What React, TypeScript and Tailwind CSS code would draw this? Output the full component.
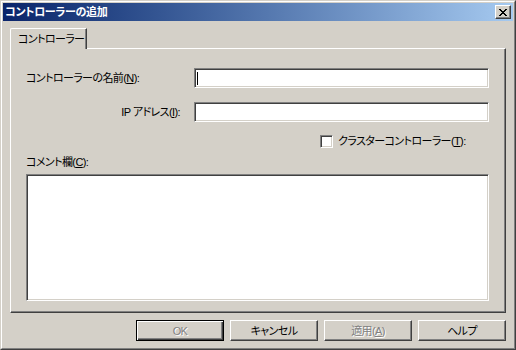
import React from 'react';

// raised 3D edge used by buttons
const raised =
  'border border-t-white border-l-white border-r-[#404040] border-b-[#404040] shadow-[inset_-1px_-1px_0_#808080]';

// sunken 3D edge used by edit boxes
const sunken =
  'border border-t-[#808080] border-l-[#808080] border-r-white border-b-white shadow-[inset_1px_1px_0_#404040,inset_-1px_-1px_0_#d4d0c8] bg-white';

const CloseGlyph: React.FC = () => {
  const rows = ['11000011', '01100110', '00111100', '00011000', '00111100', '01100110', '11000011'];
  return (
    <svg width="8" height="7" viewBox="0 0 8 7" shapeRendering="crispEdges">
      {rows.map((row, y) =>
        row.split('').map((c, x) => (c === '1' ? <rect key={`${x}-${y}`} x={x} y={y} width="1" height="1" fill="#000" /> : null))
      )}
    </svg>
  );
};

const Button: React.FC<{ label: React.ReactNode; disabled?: boolean; isDefault?: boolean }> = ({ label, disabled, isDefault }) => {
  const edge = isDefault
    ? 'border border-black shadow-[inset_1px_1px_0_#fff,inset_-1px_-1px_0_#404040,inset_-2px_-2px_0_#808080]'
    : raised;
  return (
    <div
      className={`w-[88px] h-[21px] flex items-center justify-center ${edge} ${
        disabled ? 'text-[#808080] [text-shadow:1px_1px_0_#fff]' : 'text-black'
      }`}
    >
      {label}
    </div>
  );
};

const AddControllerDialog: React.FC = () => {
  return (
    <div className="w-[516px] h-[350px] bg-[#d4d0c8] border border-t-[#d4d0c8] border-l-[#d4d0c8] border-r-[#404040] border-b-[#404040] text-[11px] leading-[14px] tracking-[-0.6px] text-black font-['Liberation_Sans','Noto_Sans_CJK_JP',sans-serif] [font-feature-settings:'palt'] whitespace-nowrap select-none">
      <div className="h-full border border-t-white border-l-white border-r-[#808080] border-b-[#808080] p-px flex flex-col">
        {/* title bar */}
        <div className="h-[18px] flex items-center justify-between pl-[2px] pr-[2px] bg-gradient-to-r from-[#0a246a] to-[#a6caf0]">
          <span className="text-white font-bold tracking-[-0.3px]">コントローラーの追加</span>
          <div className={`w-[16px] h-[14px] bg-[#d4d0c8] flex items-center justify-center ${raised}`}>
            <CloseGlyph />
          </div>
        </div>

        <div className="flex flex-col px-[7px] pt-[7px]">
          {/* tab strip */}
          <div className="relative z-10 -mb-px w-[77px] h-[21px] bg-[#d4d0c8] border-l border-t border-l-white border-t-white rounded-tl-[2px] border-r border-r-[#404040] shadow-[inset_-1px_0_0_#808080] flex items-center pl-[7px]">
            コントローラー
          </div>

          {/* tab page */}
          <div className="h-[265px] border border-t-white border-l-white border-r-[#404040] border-b-[#404040] shadow-[inset_-1px_-1px_0_#808080] flex flex-col pl-[15px]">
            <div className="mt-[19px] flex items-center">
              <span className="w-[168px]">
                コントローラーの名前(<u>N</u>):
              </span>
              <div className={`w-[295px] h-[20px] flex items-center ${sunken}`}>
                <span className="ml-[2px] w-px h-[13px] bg-black" />
              </div>
            </div>

            <div className="mt-[14px] flex items-center">
              <span className="w-[168px] text-right pr-[14px]">
                IP アドレス(<u>I</u>):
              </span>
              <div className={`w-[295px] h-[20px] ${sunken}`} />
            </div>

            <div className="mt-[12px] ml-[294px] flex items-center gap-[5px]">
              <div className={`w-[13px] h-[13px] ${sunken}`} />
              <span>
                クラスターコントローラー(<u>T</u>):
              </span>
            </div>

            <div className="mt-[7px]">
              コメント欄(<u>C</u>):
            </div>

            <div className={`mt-[5px] w-[463px] h-[127px] ${sunken}`} />
          </div>

          {/* buttons */}
          <div className="mt-[7px] flex justify-end gap-[6px]">
            <Button label="OK" disabled isDefault />
            <Button label="キャンセル" />
            <Button
              label={
                <>
                  適用(<u>A</u>)
                </>
              }
              disabled
            />
            <Button label="ヘルプ" />
          </div>
        </div>
      </div>
    </div>
  );
};

export default function App() {
  return <AddControllerDialog />;
}
